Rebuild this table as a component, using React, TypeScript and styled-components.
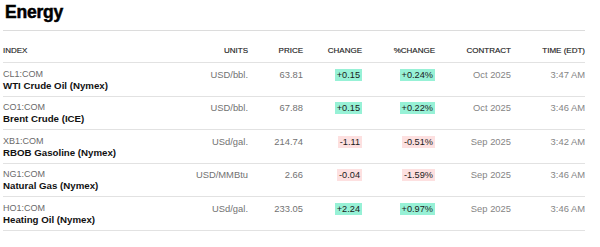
import styled, { createGlobalStyle } from "styled-components";

type Quote = {
    symbol: string;
    name: string;
    units: string;
    price: string;
    change: string;
    pct: string;
    contract: string;
    time: string;
};

const quotes: Quote[] = [
    { symbol: "CL1:COM", name: "WTI Crude Oil (Nymex)", units: "USD/bbl.", price: "63.81", change: "+0.15", pct: "+0.24%", contract: "Oct 2025", time: "3:47 AM" },
    { symbol: "CO1:COM", name: "Brent Crude (ICE)", units: "USD/bbl.", price: "67.88", change: "+0.15", pct: "+0.22%", contract: "Oct 2025", time: "3:46 AM" },
    { symbol: "XB1:COM", name: "RBOB Gasoline (Nymex)", units: "USd/gal.", price: "214.74", change: "-1.11", pct: "-0.51%", contract: "Sep 2025", time: "3:42 AM" },
    { symbol: "NG1:COM", name: "Natural Gas (Nymex)", units: "USD/MMBtu", price: "2.66", change: "-0.04", pct: "-1.59%", contract: "Sep 2025", time: "3:46 AM" },
    { symbol: "HO1:COM", name: "Heating Oil (Nymex)", units: "USd/gal.", price: "233.05", change: "+2.24", pct: "+0.97%", contract: "Sep 2025", time: "3:46 AM" },
];

const GlobalStyle = createGlobalStyle`
    body {
        margin: 0;
        background: #fff;
        font-family: "Liberation Sans", Arial, sans-serif;
    }
`;

const Wrapper = styled.div`
    width: 582px;
    padding-left: 3px;
`;

const Title = styled.h2`
    margin: 0;
    height: 31px;
    padding: 1px 0 0 2px;
    box-sizing: border-box;
    border-bottom: 1px solid #dcdcdc;
    font-size: 17.5px;
    line-height: 22px;
    font-weight: 700;
    color: #000;
    letter-spacing: -0.2px;
    -webkit-text-stroke: 0.5px #000;
`;

const Table = styled.table`
    width: 582px;
    border-collapse: collapse;
    table-layout: fixed;
`;

const HeadCell = styled.th<{ $w: number; $left?: boolean }>`
    width: ${p => p.$w}px;
    padding: 15px 0 6px;
    font-size: 8px;
    line-height: 10px;
    font-weight: 400;
    color: #222;
    text-align: ${p => (p.$left ? "left" : "right")};
    border-bottom: 1px solid #e2e2e2;
    -webkit-text-stroke: 0.15px #222;
`;

const Row = styled.tr`
    border-bottom: 1px solid #e2e2e2;
`;

const Cell = styled.td<{ $tone?: "mid" | "light" }>`
    padding: 5.5px 0 5px;
    vertical-align: top;
    text-align: right;
    font-size: 9.4px;
    line-height: 12px;
    color: ${p => (p.$tone === "light" ? "#858585" : "#727272")};
`;

const IndexCell = styled.td`
    padding: 5.5px 0 5px;
    vertical-align: top;
`;

const Symbol = styled.div`
    font-size: 9px;
    line-height: 11px;
    color: #6a6a6a;
`;

const Name = styled.div`
    font-size: 9.7px;
    line-height: 11px;
    font-weight: 700;
    color: #111;
`;

const Badge = styled.span<{ $up: boolean }>`
    display: inline-block;
    padding: 0 2px;
    font-size: 9.2px;
    line-height: 12px;
    color: #1a1a1a;
    background: ${p => (p.$up ? "#97f1d6" : "#fde0e0")};
`;

function App() {
    return (
        <Wrapper>
            <GlobalStyle />
            <Title>Energy</Title>
            <Table>
                <thead>
                    <tr>
                        <HeadCell $w={162} $left>INDEX</HeadCell>
                        <HeadCell $w={83}>UNITS</HeadCell>
                        <HeadCell $w={55}>PRICE</HeadCell>
                        <HeadCell $w={59}>CHANGE</HeadCell>
                        <HeadCell $w={73}>%CHANGE</HeadCell>
                        <HeadCell $w={76}>CONTRACT</HeadCell>
                        <HeadCell $w={74}>TIME (EDT)</HeadCell>
                    </tr>
                </thead>
                <tbody>
                    {quotes.map(q => {
                        const up = q.change.startsWith("+");
                        return (
                            <Row key={q.symbol}>
                                <IndexCell>
                                    <Symbol>{q.symbol}</Symbol>
                                    <Name>{q.name}</Name>
                                </IndexCell>
                                <Cell>{q.units}</Cell>
                                <Cell>{q.price}</Cell>
                                <Cell>
                                    <Badge $up={up}>{q.change}</Badge>
                                </Cell>
                                <Cell>
                                    <Badge $up={up}>{q.pct}</Badge>
                                </Cell>
                                <Cell $tone="light">{q.contract}</Cell>
                                <Cell $tone="light">{q.time}</Cell>
                            </Row>
                        );
                    })}
                </tbody>
            </Table>
        </Wrapper>
    );
}

export default App;
